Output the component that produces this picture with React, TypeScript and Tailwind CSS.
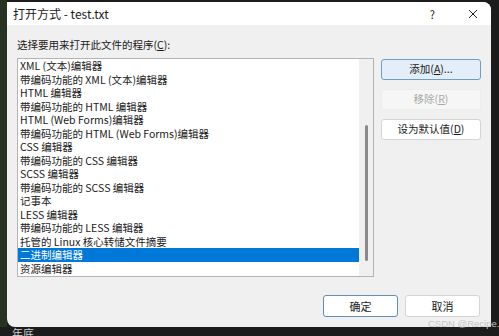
const items = [
  'XML (文本)编辑器',
  '带编码功能的 XML (文本)编辑器',
  'HTML 编辑器',
  '带编码功能的 HTML 编辑器',
  'HTML (Web Forms)编辑器',
  '带编码功能的 HTML (Web Forms)编辑器',
  'CSS 编辑器',
  '带编码功能的 CSS 编辑器',
  'SCSS 编辑器',
  '带编码功能的 SCSS 编辑器',
  '记事本',
  'LESS 编辑器',
  '带编码功能的 LESS 编辑器',
  '托管的 Linux 核心转储文件摘要',
  '二进制编辑器',
  '资源编辑器',
];

const SELECTED = 14;

export default function App() {
  return (
    <div
      className="relative w-[499px] h-[336px] bg-[#1c1c1c] flex flex-col overflow-hidden"
      style={{ fontFamily: '"Noto Sans CJK SC", "Noto Sans", sans-serif' }}
    >
      <div className="flex h-[327px]">
        <div className="w-[7px] bg-[#263322]" />
        <div className="pt-[2px]">
          <div className="w-[484px] h-[325px] bg-[#f0f0f0] rounded-tr-[8px] rounded-bl-[8px] overflow-hidden flex flex-col">
            {/* title bar */}
            <div className="h-[23px] bg-white flex items-center pl-[6px] pr-[12px] text-[12px] text-[#1a1a1a]">
              <span className="leading-[14px]">打开方式 - test.txt</span>
              <span className="ml-auto mr-[33px] text-[11px] leading-[12px]">?</span>
              <svg width="10" height="10" viewBox="0 0 10 10" className="mr-[1px]">
                <path d="M1 1L9 9M9 1L1 9" stroke="#222" strokeWidth="1" />
              </svg>
            </div>

            {/* body */}
            <div className="flex-1 flex flex-col px-[10px]">
              <div className="pt-[13px] text-[10.5px] leading-[14px] text-[#1a1a1a]">
                选择要用来打开此文件的程序(<span className="underline">C</span>):
              </div>

              <div className="flex mt-[6px]">
                <div className="w-[357px] h-[219px] bg-white border border-[#b4b4b4] flex">
                  <div className="flex-1 flex flex-col">
                    {items.map((t, i) => (
                      <div
                        key={t}
                        className={`h-[13.5px] leading-[13.5px] pl-[2px] text-[10.5px] whitespace-nowrap ${
                          i === SELECTED ? 'bg-[#0078d7] text-white' : 'text-[#1a1a1a]'
                        }`}
                      >
                        {t}
                      </div>
                    ))}
                  </div>
                  <div className="w-[14px] bg-[#f0f0f0] flex justify-center pt-[66px]">
                    <div className="w-[3px] h-[136px] bg-[#8a8a8a] rounded-full" />
                  </div>
                </div>

                <div className="ml-[7px] mt-[1px] flex flex-col gap-[9px]">
                  <button className="w-[100px] h-[21px] rounded-[3px] border border-[#6c9ec6] bg-[#e3eef8] text-[10.5px] text-[#1a1a1a] leading-none">
                    添加(<span className="underline">A</span>)...
                  </button>
                  <button className="w-[100px] h-[21px] rounded-[3px] border border-[#ececec] bg-[#f6f6f6] text-[10.5px] text-[#a8a8a8] leading-none">
                    移除(<span className="underline">R</span>)
                  </button>
                  <button className="w-[100px] h-[21px] rounded-[3px] border border-[#d4d4d4] bg-white text-[10.5px] text-[#1a1a1a] leading-none">
                    设为默认值(<span className="underline">D</span>)
                  </button>
                </div>
              </div>

              <div className="flex justify-end gap-[7px] mt-[18px] pr-[1px]">
                <button className="w-[75px] h-[22px] rounded-[3px] border border-[#5f8fb3] bg-white text-[11px] text-[#1a1a1a] leading-none">
                  确定
                </button>
                <button className="w-[75px] h-[22px] rounded-[3px] border border-[#d4d4d4] bg-white text-[11px] text-[#1a1a1a] leading-none">
                  取消
                </button>
              </div>
            </div>
          </div>
        </div>
      </div>

      {/* taskbar */}
      <div className="flex-1 bg-[#1c1c1c] pl-[12px] text-[11px] leading-[12px] text-[#cfcfcf]">年底</div>

      <span
        className="absolute left-[428px] top-[318px] whitespace-nowrap text-[9.5px] leading-[11px] text-[#c4c4c4]"
        style={{ fontFamily: '"Liberation Sans", sans-serif' }}
      >
        CSDN @Recipe.
      </span>
    </div>
  );
}
